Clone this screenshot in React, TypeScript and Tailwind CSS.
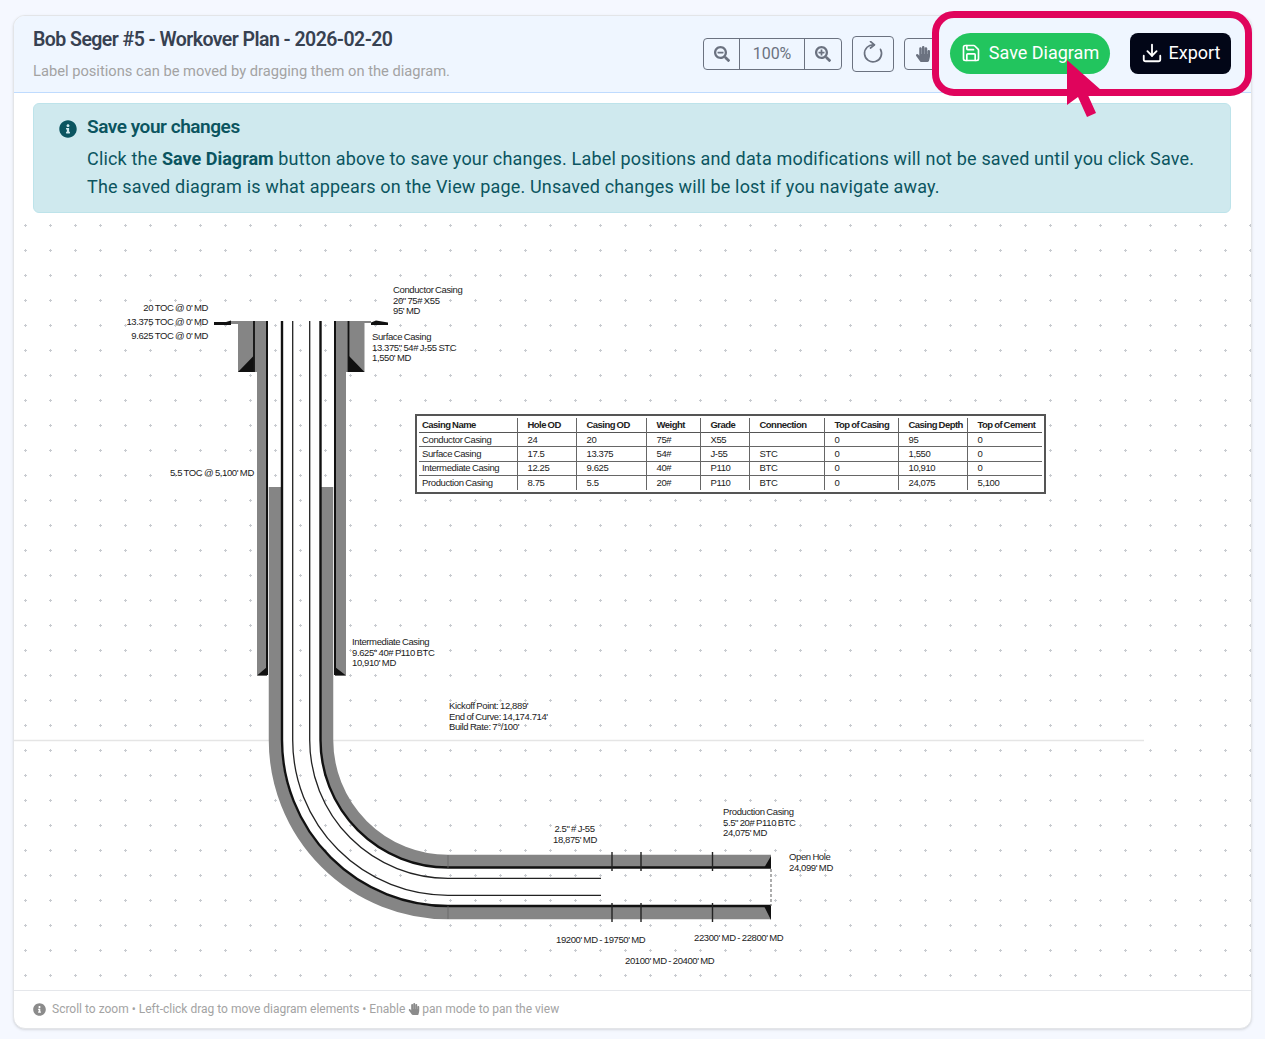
import React from 'react';
import { Save, Download } from 'lucide-react';
import { FaInfoCircle, FaHandPaper, FaSearchMinus, FaSearchPlus } from 'react-icons/fa';

const columns = ['w-[98px]', 'w-[59px]', 'w-[70px]', 'w-[54px]', 'w-[49px]', 'w-[75px]', 'w-[74px]', 'w-[69px]', ''];

const casingHeaders = ['Casing Name', 'Hole OD', 'Casing OD', 'Weight', 'Grade', 'Connection', 'Top of Casing', 'Casing Depth', 'Top of Cement'];

const casingRows = [
    ['Conductor Casing', '24', '20', '75#', 'X55', '', '0', '95', '0'],
    ['Surface Casing', '17.5', '13.375', '54#', 'J-55', 'STC', '0', '1,550', '0'],
    ['Intermediate Casing', '12.25', '9.625', '40#', 'P110', 'BTC', '0', '10,910', '0'],
    ['Production Casing', '8.75', '5.5', '20#', 'P110', 'BTC', '0', '24,075', '5,100'],
];

const labels = [
    { pos: 'left-[379px] top-[72px]', lines: ['Conductor Casing', '20" 75# X55', "95' MD"] },
    { pos: 'left-[358px] top-[119px]', lines: ['Surface Casing', '13.375" 54# J-55 STC', "1,550' MD"] },
    { pos: 'left-[94px] top-[90px] w-[100px] text-right', lines: ["20 TOC @ 0' MD"] },
    { pos: 'left-[94px] top-[104px] w-[100px] text-right', lines: ["13.375 TOC @ 0' MD"] },
    { pos: 'left-[94px] top-[118px] w-[100px] text-right', lines: ["9.625 TOC @ 0' MD"] },
    { pos: 'left-[156px] top-[255px]', lines: ["5.5 TOC @ 5,100' MD"] },
    { pos: 'left-[338px] top-[424px]', lines: ['Intermediate Casing', '9.625" 40# P110 BTC', "10,910' MD"] },
    { pos: 'left-[435px] top-[488px]', lines: ["Kickoff Point: 12,889'", "End of Curve: 14,174.714'", "Build Rate: 7°/100'"] },
    { pos: 'left-[539px] top-[611px] w-[43px] text-center', lines: ['2.5" # J-55', "18,875' MD"] },
    { pos: 'left-[709px] top-[594px]', lines: ['Production Casing', '5.5" 20# P110 BTC', "24,075' MD"] },
    { pos: 'left-[775px] top-[639px]', lines: ['Open Hole', "24,099' MD"] },
    { pos: 'left-[542px] top-[722px]', lines: ["19200' MD - 19750' MD"] },
    { pos: 'left-[680px] top-[720px]', lines: ["22300' MD - 22800' MD"] },
    { pos: 'left-[611px] top-[743px]', lines: ["20100' MD - 20400' MD"] },
];

// page coordinates, bend is centred on 448,740
function WellDrawing() {
    const gray = '#858585';
    return (
        <svg className="absolute inset-0" width="1236" height="777" viewBox="14 213 1236 777" fill="none">
            <path d="M14 740.5H269M333 740.5H1144" stroke="#e5e5e5" strokeWidth="1.5" />

            {/* surface and intermediate annulus */}
            <path d="M231 321H254V372H238V324H231Z" fill={gray} />
            <path d="M254 321H267V675.5H257V372H254Z" fill={gray} />
            <path d="M335 321H349V372H346V675.5H335Z" fill={gray} />
            <path d="M349 321H371V323H364.5V372H349Z" fill={gray} />

            {/* cement down through the bend */}
            <path d="M275 487V740A173 173 0 0 0 448 913H771" stroke={gray} strokeWidth="12.5" />
            <path d="M327 487V740A121 121 0 0 0 448 861H771" stroke={gray} strokeWidth="12.5" />

            {/* casing strings */}
            <path d="M254 321V372M348.5 321V372" stroke="#111" strokeWidth="1.8" />
            <path d="M267 321V675M335 321V675" stroke="#111" strokeWidth="2" />
            <path d="M282 321V740A166 166 0 0 0 448 906H771" stroke="#111" strokeWidth="2.4" />
            <path d="M320.5 321V740A127.5 127.5 0 0 0 448 867.5H771" stroke="#111" strokeWidth="2.4" />
            <path d="M292.7 321V740A155.3 155.3 0 0 0 448 895.3H601" stroke="#222" strokeWidth="1.3" />
            <path d="M309.7 321V740A138.3 138.3 0 0 0 448 878.3H601" stroke="#222" strokeWidth="1.3" />

            {/* shoes */}
            <path d="M214 322H226L231 320.5V325H214Z" fill="#111" />
            <path d="M388 322.5L376 320.5L371 322.5V325H388Z" fill="#111" />
            <path d="M253.5 356V372H238ZM349 356V372H364.5Z" fill="#111" />
            <path d="M267 667V675.5H257ZM335 667V675.5H346Z" fill="#111" />
            <path d="M771 856V868H764ZM771 920V906H764Z" fill="#111" />

            <path d="M771 869V906" stroke="#777" strokeWidth="1.2" strokeDasharray="3 2" />
            <path d="M448 855V868M448 906V919" stroke="#666" strokeWidth="0.8" />

            {/* perforated intervals */}
            <path d="M612 852V871M612 903V922M641 852V871M641 903V922M712.5 852V871M712.5 903V922" stroke="#222" strokeWidth="1.4" />
        </svg>
    );
}

function RotateIcon() {
    return (
        <svg width="26" height="26" viewBox="0 0 26 26" fill="none" stroke="currentColor" strokeWidth="1.7" strokeLinecap="round" strokeLinejoin="round">
            <path d="M20.5 8.3A8.5 8.5 0 1 1 14 3.9" />
            <path d="M10.5 0.5L14.5 3.8L10.5 7" />
        </svg>
    );
}

function CasingTable() {
    return (
        <div className="absolute left-[401px] top-[201px] w-[631px] h-[80px] bg-white border-2 border-[#555] px-[2px] py-[2px] font-['Liberation_Sans',Arial,sans-serif] text-[9.5px] leading-[12px] tracking-[-0.38px] [word-spacing:-0.6px] text-[#222]">
            <table className="w-full table-fixed border-collapse">
                <thead>
                    <tr className="h-[14.5px] border-b-[1.5px] border-[#555]">
                        {casingHeaders.map((h, i) => (
                            <th key={h} className={`${columns[i]} ${i === 0 ? 'pl-[3px]' : 'pl-[10px]'} text-left font-bold tracking-[-0.52px] whitespace-nowrap border-r-[1.5px] border-[#666] last:border-r-0`}>{h}</th>
                        ))}
                    </tr>
                </thead>
                <tbody>
                    {casingRows.map((row) => (
                        <tr key={row[0]} className="h-[14.3px] border-b-[1.5px] border-[#666] last:border-b-0">
                            {row.map((cell, i) => (
                                <td key={i} className={`${i === 0 ? 'pl-[3px]' : 'pl-[10px]'} whitespace-nowrap border-r-[1.5px] border-[#666] last:border-r-0`}>{cell}</td>
                            ))}
                        </tr>
                    ))}
                </tbody>
            </table>
        </div>
    );
}

export default function App() {
    return (
        <div className="relative min-h-screen bg-[#f5f8ff] pt-[15px] px-[13px] pb-[10px] font-['Roboto',sans-serif]">
            <div className="flex flex-col h-[1014px] bg-white border border-[#e3e5e8] rounded-xl shadow-sm overflow-hidden">
                <header className="flex items-start justify-between h-[77px] shrink-0 bg-[#eff6ff] border-b border-[#bfdbfe] pl-[19px]">
                    <div>
                        <h1 className="mt-[10px] text-[19.5px] leading-[28px] font-semibold text-[#374151] tracking-[-0.55px]">Bob Seger #5 - Workover Plan - 2026-02-20</h1>
                        <p className="mt-[7px] text-[14.7px] leading-[20px] text-[#a3a3a3]">Label positions can be moved by dragging them on the diagram.</p>
                    </div>
                    <div className="flex items-center gap-[10px] mt-[20px] mr-[309px] text-[#6b7280]">
                        <div className="flex items-center h-[32px] border border-[#6b7280] rounded">
                            <button className="flex items-center justify-center w-[36px] h-full border-r border-[#6b7280]"><FaSearchMinus size={16} /></button>
                            <span className="flex items-center justify-center w-[64px] h-full text-[16px] text-[#6b7280]">100%</span>
                            <button className="flex items-center justify-center w-[37px] h-full border-l border-[#6b7280]"><FaSearchPlus size={16} /></button>
                        </div>
                        <button className="flex items-center justify-center w-[42px] h-[36px] border border-[#6b7280] rounded"><RotateIcon /></button>
                        <button className="flex items-center justify-center w-[38px] h-[32px] border border-[#6b7280] rounded"><FaHandPaper size={16} /></button>
                    </div>
                </header>

                <div className="ml-[19px] mr-[20px] mt-[10px] h-[110px] shrink-0 flex bg-[#cfe9ee] border border-[#bde3ea] rounded-md text-[#0b5560] pl-[25px]">
                    <FaInfoCircle size={18} className="mt-[16px] shrink-0" />
                    <div className="ml-[10px] mt-[10px]">
                        <h2 className="text-[19px] leading-[26px] font-semibold tracking-[-0.45px]">Save your changes</h2>
                        <p className="mt-[5px] text-[18px] leading-[28px] tracking-[0.17px]">
                            Click the <strong className="font-bold tracking-normal">Save Diagram</strong> button above to save your changes. Label positions and data modifications will not be saved until you click Save.<br />
                            The saved diagram is what appears on the View page. Unsaved changes will be lost if you navigate away.
                        </p>
                    </div>
                </div>

                <div className="relative flex-1 bg-[radial-gradient(circle,#c8cbd0_1px,transparent_1.2px)] bg-[size:25px_25px] bg-[position:-1px_0px]">
                    <WellDrawing />
                    {labels.map((label) => (
                        <div key={label.lines[0]} className={`absolute ${label.pos} font-['Liberation_Sans',Arial,sans-serif] text-[9.5px] leading-[10.5px] tracking-[-0.38px] [word-spacing:-0.6px] text-[#222] whitespace-nowrap`}>
                            {label.lines.map((line) => <div key={line}>{line}</div>)}
                        </div>
                    ))}
                    <CasingTable />
                </div>

                <footer className="flex items-center h-[38px] shrink-0 border-t border-[#e5e7eb] pl-[19px] pb-[1px] text-[12px] text-[#a3a3a3]">
                    <FaInfoCircle size={13} className="text-[#8b8b8b]" />
                    <span className="ml-[6px] flex items-center">Scroll to zoom • Left-click drag to move diagram elements • Enable <FaHandPaper size={12} className="mx-[2.5px] text-[#8b8b8b]" /> pan mode to pan the view</span>
                </footer>
            </div>

            {/* highlight over the header actions */}
            <div className="absolute left-[932px] top-[11px] w-[320px] h-[85px] flex items-center bg-[#eff6ff] border-[7px] border-[#e0045c] rounded-[22px] pl-[11px]">
                <button className="flex items-center justify-center gap-[8px] w-[160px] h-[41px] pb-[2px] rounded-full bg-[#22c55e] text-white text-[18px]">
                    <Save size={20} />
                    Save Diagram
                </button>
                <button className="flex items-center justify-center gap-[6px] w-[101px] h-[41px] pb-[2px] ml-[20px] rounded-lg bg-[#020617] text-white text-[18px]">
                    <Download size={22} />
                    Export
                </button>
            </div>
            <svg className="absolute left-[1060px] top-[55px]" width="50" height="66" viewBox="1060 55 50 66">
                <path d="M1067 60L1101 90L1087 93L1096 113L1087 117L1078 97L1067 105Z" fill="#e0045c" />
            </svg>
        </div>
    );
}
